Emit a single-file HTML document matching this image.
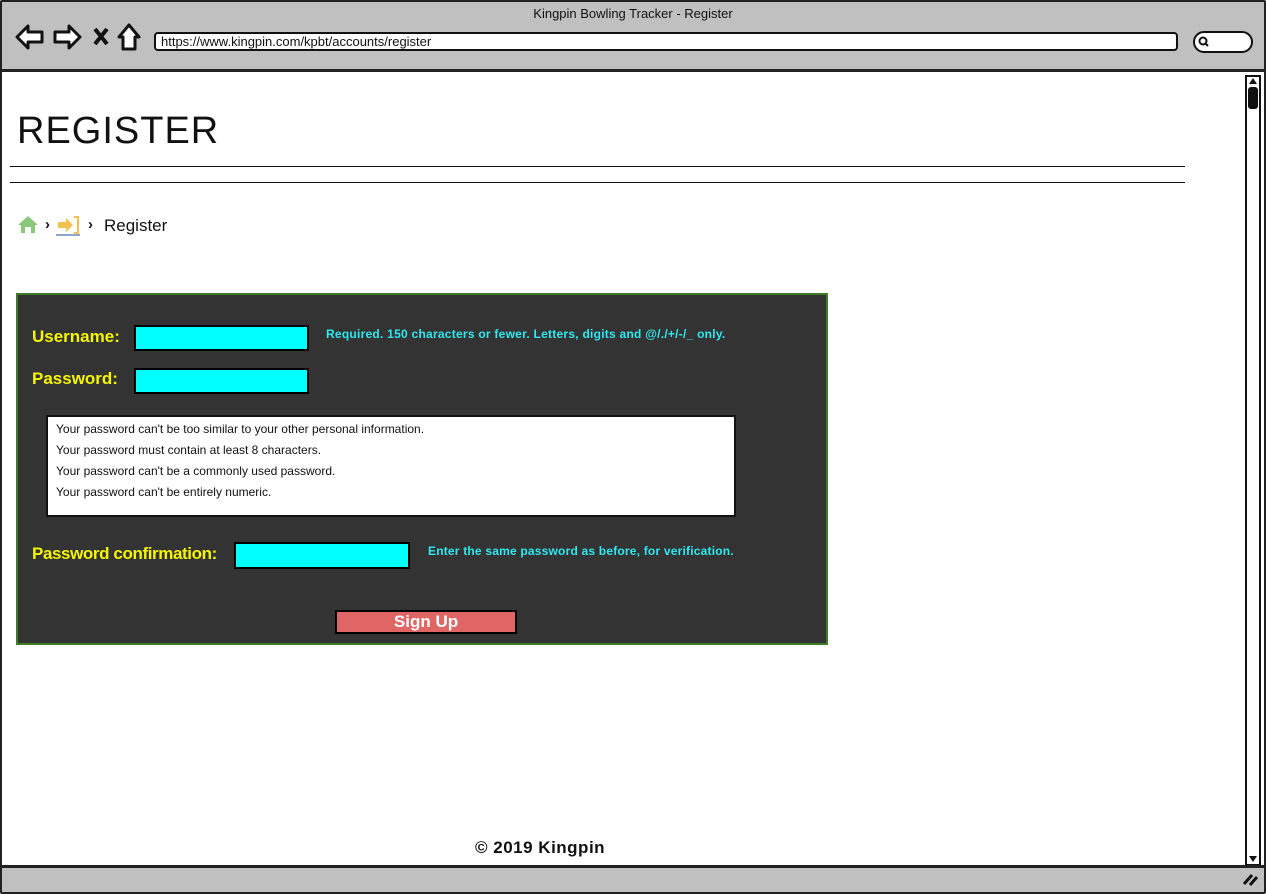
<!DOCTYPE html>
<html><head><meta charset="utf-8"><style>
*{margin:0;padding:0;box-sizing:border-box}
body{width:1266px;height:894px;background:#fff;font-family:"Liberation Sans",sans-serif;position:relative;overflow:hidden}
.a{position:absolute}
</style></head><body>
<div class="a" style="left:0;top:0;width:1266px;height:894px;border:2px solid #222;border-radius:2px"></div>
<div class="a" style="left:2px;top:2px;width:1262px;height:70px;background:#c0c0c0;border-bottom:3px solid #222"></div>
<div class="a" style="left:0;top:6px;width:1266px;text-align:center;font-size:13px;color:#111">Kingpin Bowling Tracker - Register</div>
<svg class="a" style="left:14px;top:22px" width="130" height="30" viewBox="0 0 130 30">
<path d="M3 15 L14 4 L14 10 L28 10 L28 20 L14 20 L14 26 Z" fill="#fff" stroke="#111" stroke-width="3" stroke-linejoin="round"/>
<path d="M66 15 L55 4 L55 10 L41 10 L41 20 L55 20 L55 26 Z" fill="#fff" stroke="#111" stroke-width="3" stroke-linejoin="round"/>
<path d="M81 7 L93 22 M93 7 L81 22" stroke="#111" stroke-width="4"/>
<path d="M105 15 L115 3 L125 15 L121 15 L121 27 L109 27 L109 15 Z" fill="#fff" stroke="#111" stroke-width="3" stroke-linejoin="round"/>
</svg>
<div class="a" style="left:154px;top:32px;width:1024px;height:19px;background:#fff;border:2px solid #111;border-radius:4px;font-size:13px;line-height:15px;padding-left:5px;color:#111">https://www.kingpin.com/kpbt/accounts/register</div>
<div class="a" style="left:1193px;top:31px;width:60px;height:22px;background:#fff;border:2px solid #111;border-radius:12px"></div>
<svg class="a" style="left:1197px;top:35px" width="14" height="14"><circle cx="6" cy="6" r="3.5" stroke="#111" stroke-width="2" fill="none"/><path d="M8 8 L11 11" stroke="#111" stroke-width="2"/></svg>
<div class="a" style="left:1245px;top:75px;width:16px;height:791px;border:2px solid #111;background:#fff"></div>
<div class="a" style="left:1249px;top:78px;width:0;height:0;border-left:4px solid transparent;border-right:4px solid transparent;border-bottom:6px solid #111"></div>
<div class="a" style="left:1248px;top:87px;width:10px;height:22px;background:#111;border-radius:3px"></div>
<div class="a" style="left:1249px;top:856px;width:0;height:0;border-left:4px solid transparent;border-right:4px solid transparent;border-top:6px solid #111"></div>
<div class="a" style="left:2px;top:865px;width:1262px;height:27px;background:#c0c0c0;border-top:3px solid #222"></div>
<svg class="a" style="left:1240px;top:870px" width="20" height="18"><path d="M4 14 L12 5 M10 15 L17 7" stroke="#111" stroke-width="3"/></svg>
<div class="a" style="left:17px;top:110px;font-size:38px;color:#111;letter-spacing:1px">REGISTER</div>
<div class="a" style="left:10px;top:166px;width:1175px;height:1px;background:#111"></div>
<div class="a" style="left:10px;top:182px;width:1175px;height:1px;background:#111"></div>
<svg class="a" style="left:16px;top:214px" width="24" height="20"><path d="M2 11 L12 2 L22 11 L19 11 L19 19 L15 19 L15 13 L9 13 L9 19 L5 19 L5 11 Z" fill="#8cc77e"/></svg>
<div class="a" style="left:45px;top:216px;font-size:15px;font-weight:bold;color:#111">›</div>
<svg class="a" style="left:56px;top:214px" width="26" height="22"><path d="M2 8 L10 8 L10 4 L17 11 L10 18 L10 14 L2 14 Z" fill="#f2c14e"/><path d="M18 3 L22 3 L22 19 L18 19" fill="none" stroke="#f2c14e" stroke-width="2"/><path d="M0 21 L24 21" stroke="#1f4e9a" stroke-width="1"/></svg>
<div class="a" style="left:88px;top:216px;font-size:15px;font-weight:bold;color:#111">›</div>
<div class="a" style="left:104px;top:216px;font-size:17px;color:#111">Register</div>
<div class="a" style="left:16px;top:293px;width:812px;height:352px;background:#333;border:2px solid #3f7a24"></div>
<div class="a" style="left:32px;top:327px;font-size:17px;font-weight:bold;color:#f5f500">Username:</div>
<div class="a" style="left:134px;top:325px;width:175px;height:26px;background:#00ffff;border:2px solid #000"></div>
<div class="a" style="left:326px;top:327px;font-size:12px;font-weight:bold;color:#2fe8f0;letter-spacing:0.25px">Required. 150 characters or fewer. Letters, digits and @/./+/-/_ only.</div>
<div class="a" style="left:32px;top:369px;font-size:17px;font-weight:bold;color:#f5f500">Password:</div>
<div class="a" style="left:134px;top:368px;width:175px;height:26px;background:#00ffff;border:2px solid #000"></div>
<div class="a" style="left:46px;top:415px;width:690px;height:102px;background:#fff;border:2px solid #111;padding:2px 0 0 8px;font-size:12px;line-height:21px;color:#111">Your password can't be too similar to your other personal information.<br>Your password must contain at least 8 characters.<br>Your password can't be a commonly used password.<br>Your password can't be entirely numeric.</div>
<div class="a" style="left:32px;top:544px;font-size:17px;font-weight:bold;color:#f5f500;letter-spacing:-0.4px">Password confirmation:</div>
<div class="a" style="left:234px;top:542px;width:176px;height:27px;background:#00ffff;border:2px solid #000"></div>
<div class="a" style="left:428px;top:544px;font-size:12px;font-weight:bold;color:#2fe8f0;letter-spacing:0.2px">Enter the same password as before, for verification.</div>
<div class="a" style="left:335px;top:610px;width:182px;height:24px;background:#e06666;border:2px solid #000;text-align:center;font-size:17px;font-weight:bold;color:#fff;line-height:20px">Sign Up</div>
<div class="a" style="left:475px;top:838px;font-size:17px;font-weight:bold;color:#111;letter-spacing:0.5px">© 2019 Kingpin</div>
</body></html>
